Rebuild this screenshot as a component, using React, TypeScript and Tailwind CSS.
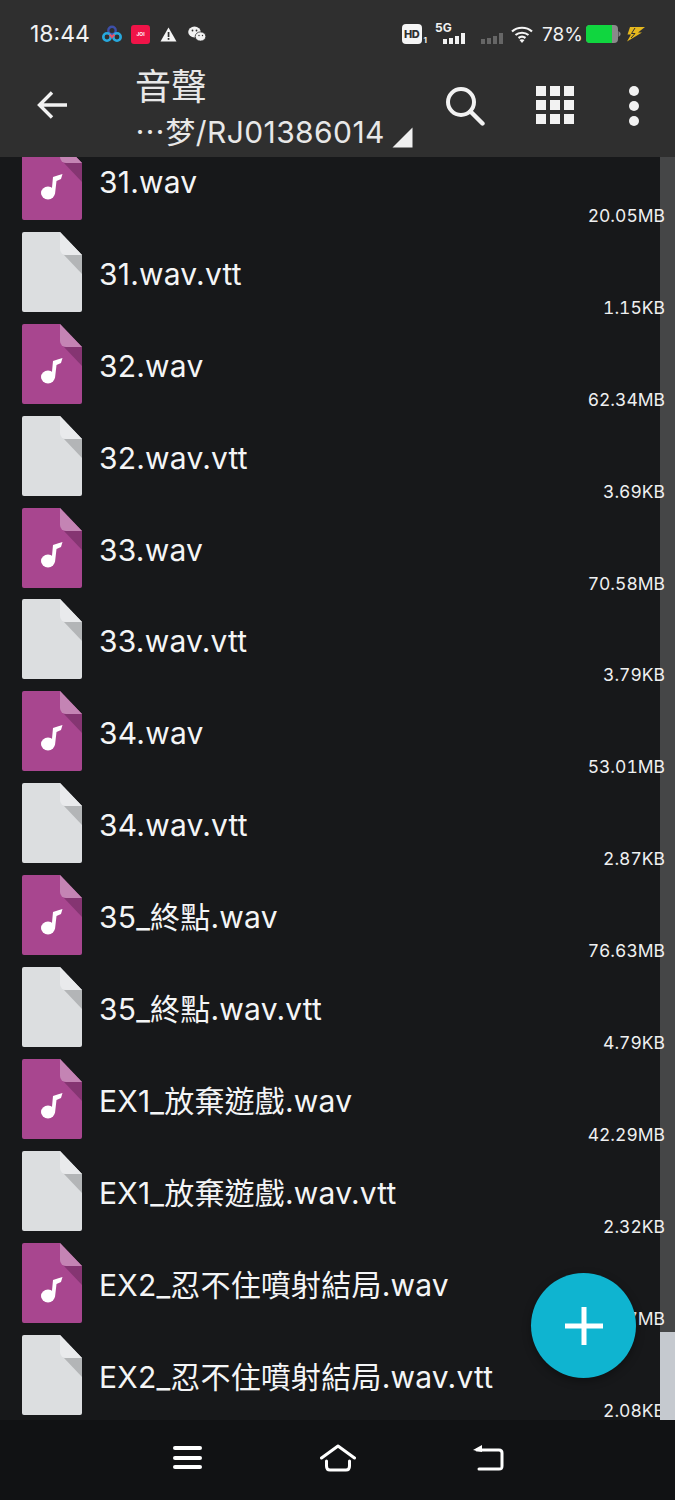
const files = [
  { name: '31.wav', size: '20.05MB', audio: true },
  { name: '31.wav.vtt', size: '1.15KB' },
  { name: '32.wav', size: '62.34MB', audio: true },
  { name: '32.wav.vtt', size: '3.69KB' },
  { name: '33.wav', size: '70.58MB', audio: true },
  { name: '33.wav.vtt', size: '3.79KB' },
  { name: '34.wav', size: '53.01MB', audio: true },
  { name: '34.wav.vtt', size: '2.87KB' },
  { name: '35_終點.wav', size: '76.63MB', audio: true },
  { name: '35_終點.wav.vtt', size: '4.79KB' },
  { name: 'EX1_放棄遊戲.wav', size: '42.29MB', audio: true },
  { name: 'EX1_放棄遊戲.wav.vtt', size: '2.32KB' },
  { name: 'EX2_忍不住噴射結局.wav', size: '72.17MB', audio: true },
  { name: 'EX2_忍不住噴射結局.wav.vtt', size: '2.08KB' },
]

function FileIcon({ audio }: { audio?: boolean }) {
  const body = audio ? '#a8468f' : '#dcdee0'
  const fold = audio ? '#c484b4' : '#e9eaec'
  const shade = audio ? '#853572' : '#b3b5b7'
  return (
    <svg width="60" height="80" viewBox="0 0 60 80" className="shrink-0">
      <path d="M2 0H38L60 23V78a2 2 0 0 1-2 2H2a2 2 0 0 1-2-2V2a2 2 0 0 1 2-2Z" fill={body} />
      <path d="M38 0L60 23H44a6 6 0 0 1-6-6Z" fill={fold} />
      <path d="M42 23H60V42Z" fill={shade} />
      {audio && (
        <>
          <ellipse cx="26" cy="53" rx="7" ry="6.500" fill="#fff" />
          <path d="M29.500 53L31 37C34 36 37 35 40.500 34L39 39L34.500 41L33 54Z" fill="#fff" />
        </>
      )}
    </svg>
  )
}

function FileRow({ name, size, audio }: { name: string; size: string; audio?: boolean }) {
  return (
    <div className="flex h-[91.9px] pl-[22px] pr-[10px] pt-[4px]">
      <FileIcon audio={audio} />
      <div className="flex flex-1 flex-col pl-[17px] pt-[24px]">
        <div className="h-[36px] whitespace-nowrap text-[30px] font-normal leading-[36px] tracking-[0.2px] text-[#f4f5f6]">{name}</div>
        <div className="mt-[5px] h-[22px] text-right text-[17.5px] font-normal tabular-nums leading-[22px] text-[#eeeff0]">{size}</div>
      </div>
    </div>
  )
}

function StatusBar() {
  return (
    <div className="flex h-[68px] items-center pl-[30px] pr-[30px] text-[#f2f2f2]">
      <span className="w-[59px] text-[23px] font-normal leading-none">18:44</span>
      {/* app icons */}
      <svg width="20" height="18" viewBox="0 0 20 18" className="ml-[13px]">
        <circle cx="10" cy="5.500" r="3.700" fill="none" stroke="#3d4fa8" strokeWidth="2.400" />
        <circle cx="5" cy="12" r="3.700" fill="none" stroke="#27a9de" strokeWidth="2.600" />
        <circle cx="15" cy="12" r="3.700" fill="none" stroke="#27a9de" strokeWidth="2.600" />
        <path d="M7.500 9.500L10 12L12.500 9.500" fill="none" stroke="#e8506a" strokeWidth="2.200" />
      </svg>
      <div className="ml-[9px] flex h-[19px] w-[19px] items-center justify-center rounded-[3px] bg-[#f01448] text-[5px] font-bold leading-none text-white">
        JOI
      </div>
      <svg width="17" height="15" viewBox="0 0 17 15" className="ml-[10px]">
        <path d="M8.500 0.500L16.500 14.500H0.500Z" fill="#f5f5f5" />
        <rect x="7.700" y="5" width="1.700" height="5" fill="#2f2f2f" />
        <rect x="7.700" y="11" width="1.700" height="1.800" fill="#2f2f2f" />
      </svg>
      <svg width="18" height="16" viewBox="0 0 18 16" className="ml-[11px]">
        <ellipse cx="6.500" cy="6" rx="6.300" ry="5.400" fill="#f2f2f2" />
        <ellipse cx="12.500" cy="10.500" rx="5.300" ry="4.600" fill="#f2f2f2" stroke="#2f2f2f" strokeWidth="0.800" />
        <circle cx="4.500" cy="4.500" r="0.900" fill="#2f2f2f" />
        <circle cx="8.500" cy="4.500" r="0.900" fill="#2f2f2f" />
        <circle cx="11" cy="9.500" r="0.700" fill="#2f2f2f" />
        <circle cx="14.500" cy="9.500" r="0.700" fill="#2f2f2f" />
      </svg>

      <div className="flex-1" />

      {/* HD badge */}
      <div className="flex h-[20px] w-[20px] items-center justify-center rounded-[4px] bg-[#f5f5f5] text-[11px] font-extrabold leading-none tracking-[-0.5px] text-[#2f2f2f]">
        HD
      </div>
      <span className="ml-[2px] mt-[12px] text-[8px] font-bold leading-none">1</span>
      <div className="relative ml-[8px] h-[20px] w-[30px]">
        <span className="absolute left-0 top-[-2px] text-[12px] font-bold leading-none">5G</span>
        <svg width="22" height="11" viewBox="0 0 22 11" className="absolute bottom-0 right-0">
          <rect x="0" y="6" width="4" height="5" fill="#f2f2f2" />
          <rect x="6" y="5" width="4" height="6" fill="#f2f2f2" />
          <rect x="12" y="3" width="4" height="8" fill="#f2f2f2" />
          <rect x="18" y="0" width="4" height="11" fill="#f2f2f2" />
        </svg>
      </div>
      <svg width="22" height="11" viewBox="0 0 22 11" className="ml-[16px] mt-[9px]">
        <rect x="0" y="6" width="4" height="5" fill="#666" />
        <rect x="6" y="5" width="4" height="6" fill="#666" />
        <rect x="12" y="3" width="4" height="8" fill="#666" />
        <rect x="18" y="0" width="4" height="11" fill="#666" />
      </svg>
      <svg width="22" height="17" viewBox="0 0 22 17" className="ml-[8px]">
        <path d="M1 5.500C6.500 0.500 15.500 0.500 21 5.500M4.500 9C8 6 14 6 17.500 9M7.500 12C9.500 10.500 12.500 10.500 14.500 12" fill="none" stroke="#f5f5f5" strokeWidth="2.200" />
        <path d="M11 17L8.500 14C10 13 12 13 13.500 14Z" fill="#f5f5f5" />
      </svg>
      <span className="ml-[9px] w-[39px] whitespace-nowrap text-[19px] font-normal leading-none">78%</span>
      <svg width="35" height="18" viewBox="0 0 35 18" className="ml-[5px]">
        <rect x="0" y="0" width="32" height="18" rx="4" fill="#8a8a8a" />
        <path d="M4 0H26V18H4a4 4 0 0 1-4-4V4a4 4 0 0 1 4-4Z" fill="#10d63f" />
        <path d="M32.500 6L34.500 8V10L32.500 12Z" fill="#8a8a8a" />
      </svg>
      <svg width="19" height="16" viewBox="0 0 19 16" className="ml-[5px]">
        <path d="M4 1H19L12 6.500H16L1 15.500L5 8.500H1.500Z" fill="#e6b81e" />
        <path d="M9 2L5.500 7.500H9L5 12" fill="none" stroke="#2f2f2f" strokeWidth="1" />
      </svg>
    </div>
  )
}

function Toolbar() {
  return (
    <div className="flex h-[89px] items-start">
      <svg width="32" height="30" viewBox="0 0 32 30" className="ml-[37px] mt-[22px]">
        <path d="M30 15H3M15 2.500L2.500 15L15 27.500" fill="none" stroke="#f2f2f2" strokeWidth="3.400" />
      </svg>
      <div className="ml-[66px] flex w-[300px] flex-col">
        <div className="h-[44px] text-[36px] font-normal leading-[38px] text-[#e8e8e8]">音聲</div>
        <div className="relative whitespace-nowrap text-[30px] font-normal leading-[40px] tracking-[0.4px] text-[#e8e8e8]">
          ⋯梦/RJ01386014
          <svg width="21" height="21" viewBox="0 0 21 21" className="absolute left-[257px] top-[15px]">
            <path d="M20.500 0.500V20.500H0.500Z" fill="#f0f0f0" />
          </svg>
        </div>
      </div>
      <svg width="40" height="40" viewBox="0 0 40 40" className="ml-[10px] mt-[18px]">
        <circle cx="16" cy="16" r="13" fill="none" stroke="#f2f2f2" strokeWidth="4" />
        <path d="M25.500 25.500L37.500 37.500" stroke="#f2f2f2" strokeWidth="4.400" strokeLinecap="round" />
      </svg>
      <div className="ml-[51px] mt-[18px] grid grid-cols-[repeat(3,10px)] gap-[4px]">
        {Array.from({ length: 9 }).map((_, i) => (
          <div key={i} className="h-[10px] w-[10px] bg-[#f2f2f2]" />
        ))}
      </div>
      <div className="ml-[55px] mt-[18px] flex flex-col gap-[5px]">
        {[0, 1, 2].map((i) => (
          <div key={i} className="h-[10px] w-[10px] rounded-full bg-[#f2f2f2]" />
        ))}
      </div>
    </div>
  )
}

function NavBar() {
  return (
    <div className="flex h-[80px] shrink-0 items-center bg-[#111214] pb-[5px]">
      <div className="ml-[173px] flex w-[29px] flex-col gap-[5.500px]">
        {[0, 1, 2].map((i) => (
          <div key={i} className="h-[4px] rounded-full bg-white" />
        ))}
      </div>
      <svg width="36" height="28" viewBox="0 0 36 28" className="ml-[118px]">
        <path d="M1.500 14L18 2L34.500 14" fill="none" stroke="#fff" strokeWidth="3" strokeLinecap="round" strokeLinejoin="round" />
        <path d="M6.500 17V22C6.500 25 8 26 10 26H26C28 26 29.500 25 29.500 22V17" fill="none" stroke="#fff" strokeWidth="3" strokeLinecap="round" />
      </svg>
      <svg width="32" height="28" viewBox="0 0 32 28" className="ml-[116px]">
        <path d="M5 6H27C29.500 6 30 7 30 9V22C30 24.500 29.500 25 27 25H7" fill="none" stroke="#fff" strokeWidth="3" strokeLinecap="round" />
        <path d="M10 1L1 6L10 8Z" fill="#fff" />
      </svg>
    </div>
  )
}

export default function App() {
  return (
    <div className="relative flex h-[1500px] w-[675px] flex-col overflow-hidden bg-[#17181a] font-['Inter','Noto_Sans_CJK_TC',sans-serif]">
      <div className="z-10 h-[157px] shrink-0 bg-[#2f2f2f]">
        <StatusBar />
        <Toolbar />
      </div>

      <div className="relative flex-1 overflow-hidden">
        <div className="mt-[-21px]">
          {files.map((f) => (
            <FileRow key={f.name} {...f} />
          ))}
        </div>
        {/* scrollbar */}
        <div className="absolute bottom-0 right-0 top-0 flex w-[15px] flex-col justify-end bg-[#ffffff]/20">
          <div className="h-[88px] bg-[#c5c9cf]" />
        </div>
      </div>

      <NavBar />

      {/* add button */}
      <div className="absolute left-[531px] top-[1273px] flex h-[105px] w-[105px] items-center justify-center rounded-full bg-[#0fb4d0] shadow-[0_3px_8px_rgba(0,0,0,0.35)]">
        <svg width="38" height="38" viewBox="0 0 38 38">
          <path d="M19 0V38M0 19H38" stroke="#fff" strokeWidth="5" />
        </svg>
      </div>
    </div>
  )
}
